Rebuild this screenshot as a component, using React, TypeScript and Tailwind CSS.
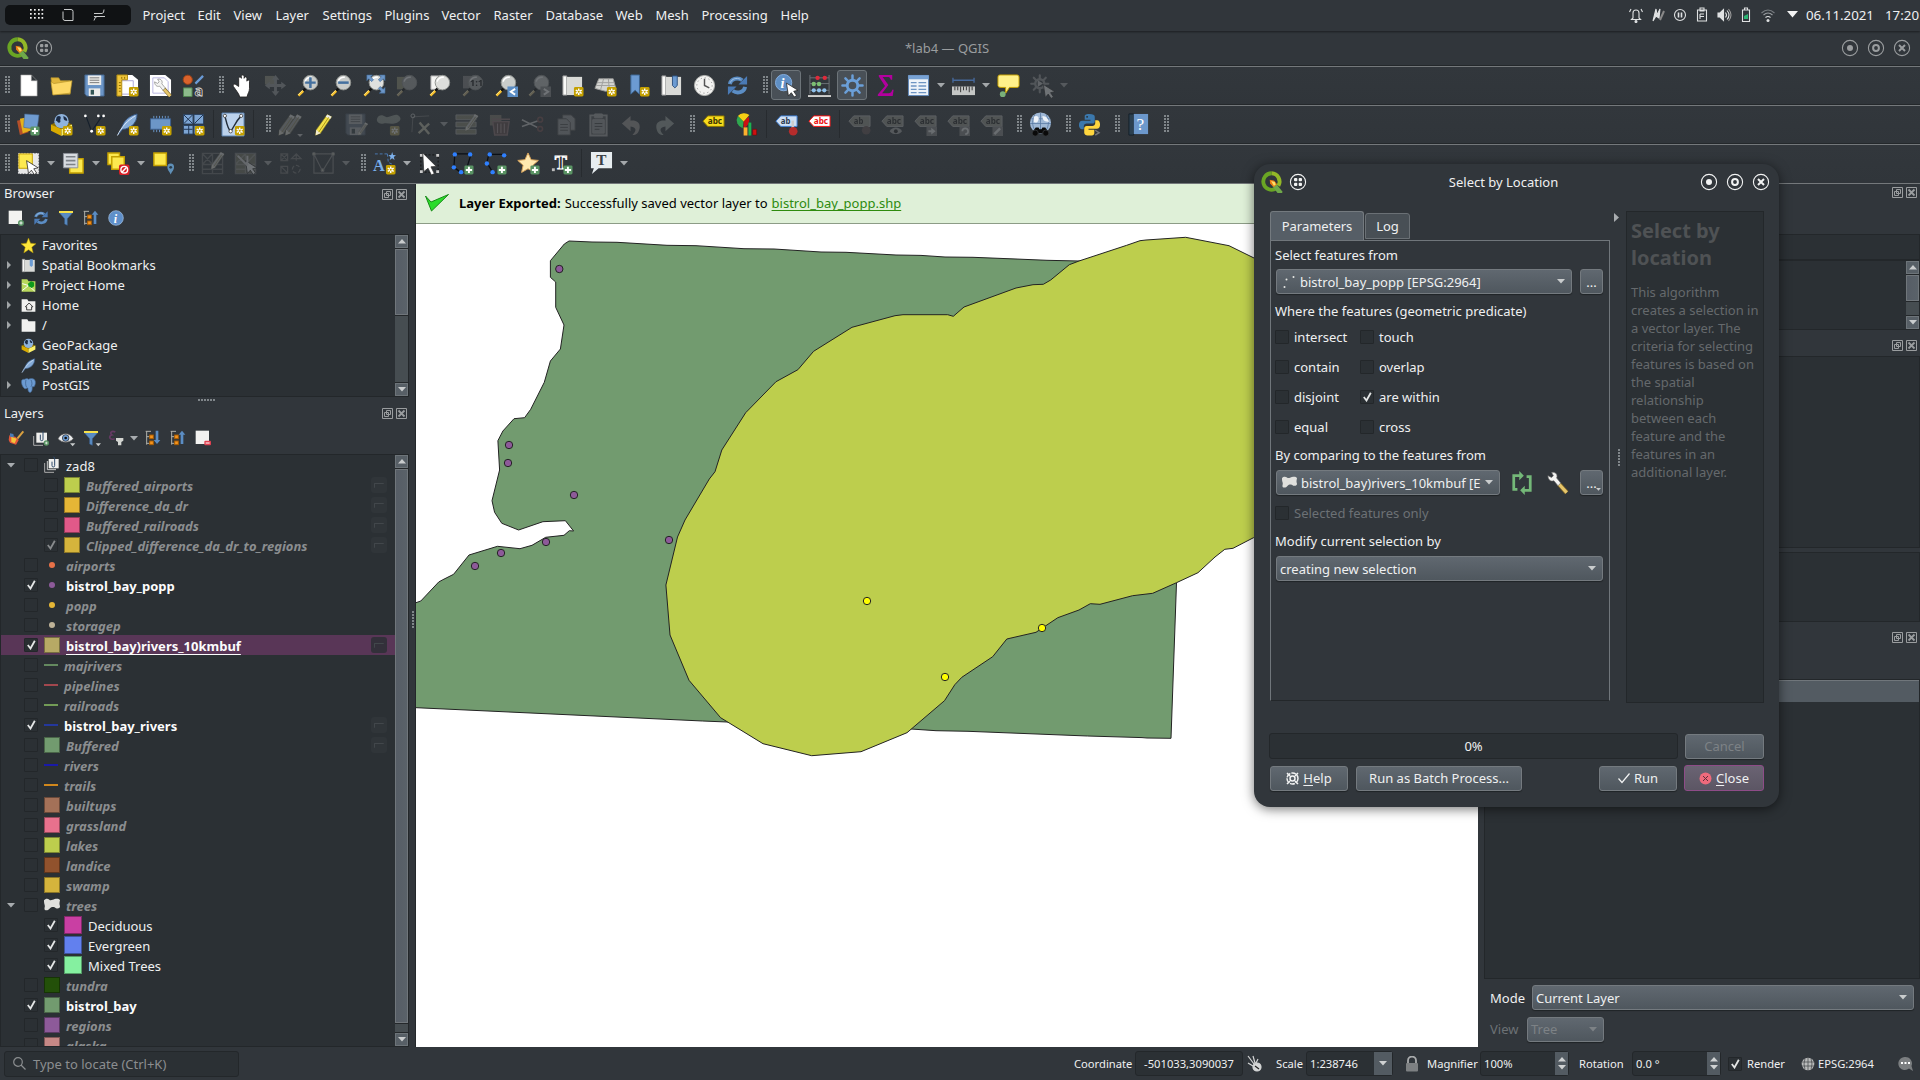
import React from "react";
import type { ReactNode } from "react";

/* ---------- icon primitives (24 x 24 canvas) ---------- */

const StarBadge = () => (
  <g>
    <rect x="13.5" y="13.5" width="10" height="10" rx="1.5" fill="#c4a000" />
    <path d="M18.5 15v7M15.4 16.8l6.2 3.5M15.4 20.3l6.2-3.5" stroke="#fff" strokeWidth="1.5" />
    <circle cx="18.5" cy="18.5" r="1.1" fill="#c4a000" />
  </g>
);
const PlusBadge = () => (
  <g>
    <rect x="14" y="14" width="9.5" height="9.5" rx="1.5" fill="#5a9464" />
    <path d="M18.7 15.5v6.5M15.5 18.7h6.5" stroke="#fff" strokeWidth="2" />
  </g>
);
const Lens = ({ fill = "#c9ccca" }: { fill?: string }) => (
  <g>
    <path d="M9 15 6 18" stroke="#111" strokeWidth="2.4" />
    <path d="M6.5 17.5 1.5 22.5" stroke="#f9c22e" strokeWidth="2.6" />
    <path d="M6 17 1.2 21.8" stroke="#fff0a0" strokeWidth=".7" />
    <circle cx="14" cy="9" r="7.6" fill={fill} stroke="#8e918e" strokeWidth="1" />
    <path d="M8.5 8a6 6 0 0 1 7-4.6" stroke="#fff" strokeWidth="1.6" fill="none" />
  </g>
);
const Cursor = ({ x = 0, y = 0 }: { x?: number; y?: number }) => (
  <path
    transform={`translate(${x} ${y})`}
    d="M0 0 12 7.5 7.5 8.5 10.5 13 8 14.5 5 10 2 13.5Z"
    fill="#fff"
    stroke="#222"
    strokeWidth=".8"
  />
);
const Tag = ({ fill, stroke, text, label = "abc" }: { fill: string; stroke: string; text: string; label?: string }) => (
  <g>
    <path d="M1 8.500 6 3h17v11H6Z" fill={fill} stroke={stroke} />
    <text
      x="6"
      y="11.800"
      fontSize="9"
      fontWeight="700"
      fill={text}
      fontFamily="Noto Sans"
      textLength={label === "ab" ? 10 : 15}
      lengthAdjust="spacingAndGlyphs"
    >
      {label}
    </text>
  </g>
);
const Refresh = () => (
  <g fill="none" stroke="#5b8dc4" strokeWidth="4">
    <path d="M4 10.5C5 5 12 3 17 6.5" />
    <path d="M20 13.5C19 19 12 21 7 17.5" />
    <path d="M22 2v9h-9ZM2 22v-9h9Z" fill="#4a7ab5" stroke="none" />
    <path d="M4.5 9C6 5 11 3.5 15 5.5" stroke="#a5c4e6" strokeWidth="1" />
  </g>
);
const Tree = () => (
  <g fill="none" stroke="#b9b9b3" strokeWidth="1.4">
    <path d="M1 2h8M2.5 2v20M2.5 10h5M2.5 20h5" />
    <rect x="7" y="7.500" width="5.500" height="5.500" fill="#f5931d" stroke="#a85c00" />
    <rect x="7" y="16.500" width="5.500" height="5.500" fill="#f5931d" stroke="#a85c00" />
  </g>
);
const Gear = ({ c = "#6b9fd8" }: { c?: string }) => (
  <g fill="none" stroke={c}>
    <circle cx="12" cy="12" r="5.500" strokeWidth="3" />
    <path
      strokeWidth="2.600"
      strokeLinecap="round"
      d="M12 1.500V6M12 18v4.500M1.500 12H6M18 12h4.500M4.600 4.600l3 3M16.400 16.400l3 3M4.600 19.400l3-3M16.400 7.600l3-3"
    />
  </g>
);
const Pencil = ({ c = "#f2e04a" }: { c?: string }) => (
  <g>
    <path d="M17 1.5 21.500 4 10 21 4.800 23.300 5.500 17.500Z" fill={c} stroke="#7a6f1a" strokeWidth=".6" />
    <path d="M17 1.500 21.500 4 20 6.300 15.400 3.800Z" fill="#e9e9e5" />
    <path d="M5.500 17.500 10 21 4.800 23.300Z" fill="#f1ead0" />
    <path d="M18.500 4.500 8 20" stroke="#a99416" strokeWidth="1" />
  </g>
);
const Floppy = () => (
  <g>
    <path d="M2 1h20v22H4l-2-2Z" fill="#6a94c6" stroke="#44658d" />
    <rect x="5" y="1.500" width="14" height="10" fill="#ececea" />
    <path d="M7 4h10M7 6.500h10M7 9h10" stroke="#777" />
    <rect x="6" y="15" width="12" height="8" fill="#ececea" />
    <rect x="8" y="16.500" width="3.500" height="5" fill="#355" />
  </g>
);
const Grid = ({ c = "#5b86bb" }: { c?: string }) => (
  <g fill="none" stroke={c} strokeWidth="1.4">
    <path d="M1.500 1.500h21v21h-21zM1.500 13h21M12 1.500v21M1.500 1.500l10 11M12 1.500l-10 11M22.500 1.500l-10 11M1.500 18h21" />
  </g>
);
const Nodes = () => (
  <g>
    <path d="M3 3 9 19 20 3" fill="none" stroke="#16202c" strokeWidth="1.2" />
    <circle cx="2.500" cy="3" r="1.400" fill="#fff" />
    <circle cx="9" cy="19" r="1.500" fill="#fff" />
    <circle cx="16" cy="3" r="1.400" fill="#fff" />
    <circle cx="21.500" cy="3" r="1.400" fill="#fff" />
  </g>
);
const Feather = () => (
  <g>
    <path d="M2 23 6 15C9 7 14 3 22 1c0 6-2 9-5 12-3 2-6 4-10 4Z" fill="#86acd8" stroke="#35557f" />
    <path d="M1.500 23.500C6 14 12 8 20 3" fill="none" stroke="#e8f1fb" strokeWidth=".9" />
  </g>
);
const BoxGlobe = () => (
  <g>
    <path d="M1 12 12 7l11 5-11 6Z" fill="#8c6f00" />
    <circle cx="12" cy="8.500" r="7.500" fill="#8fb3dc" />
    <path d="M7 4c3-2 5 0 4 2s1 3-1 4-2-2-4-2M14 3c3 1 4 3 4 5-3 0-4-1-4-5" fill="#1d2c44" />
    <path d="M1 12 12 17v7L1 18.500Z" fill="#d9ab00" />
    <path d="M23 12 12 17v7l11-5.500Z" fill="#fbf06a" />
  </g>
);
const Funnel = () => (
  <g>
    <path d="M2 4h20l-8 9v10l-4-2v-8Z" fill="#5b8dc4" stroke="#3b6090" strokeWidth=".8" />
    <path d="M1.500 1.500h21v3h-21z" fill="#f6e04a" />
  </g>
);
const Book = () => (
  <g>
    <path d="M2 2h4v20H2z" fill="#fafaf8" stroke="#999" />
    <path d="M6 3h16v19H6z" fill="#d9dad7" />
  </g>
);
const Wrench = () => (
  <g>
    <path d="M13 13 21.500 22.500" stroke="#7c6427" strokeWidth="5" />
    <path d="M13 13 21.500 22.500" stroke="#e6c66b" strokeWidth="3.400" />
    <path d="M1 4 5 6 7 4 5 .5c3-.8 6 1 6 4l-.5 2L15 12l-3 3-4.500-5.500C4 11 1 8 1 4Z" fill="#f4f4f2" stroke="#666" strokeWidth=".7" />
  </g>
);

const icons: Record<string, ReactNode> = {
  newfile: <path d="M4 1h11l6 6v16H4ZM15 1v6h6" fill="#fff" stroke="#999" strokeWidth=".6" />,
  open: (
    <g stroke="#b5932a" strokeWidth=".7">
      <path d="M1 4h8l2 3h10v14H3Z" fill="#e0b53c" />
      <path d="M4 10 23 7 21 20 3 22 1 8Z" fill="#fdd866" />
    </g>
  ),
  save: <Floppy />,
  layout: (
    <g>
      <path d="M1 1h16l6 5v17H1Z" fill="#fff" />
      <path d="M4 7h14v14H4z" fill="none" stroke="#aaa6d8" />
      <path d="M1 1h11v5H6v17H1Z" fill="#f0c53a" stroke="#b08b10" />
      <path d="M3 9h2M3 12h2M3 15h2M3 18h2M6 3v2M9 3v2" stroke="#8a6b00" />
      <StarBadge />
    </g>
  ),
  layoutmgr: (
    <g>
      <path d="M1 1h16l6 5v17H1Z" fill="#fff" />
      <path d="M4 4h12l4 4v12H4z" fill="none" stroke="#b9b6e2" />
      <g transform="translate(5 5) scale(.8)">
        <Wrench />
      </g>
    </g>
  ),
  style: (
    <g>
      <circle cx="6" cy="6" r="4.800" fill="#d9632c" stroke="#9c4216" />
      <path d="M14 10 22 2" stroke="#6a9bd6" strokeWidth="2.400" />
      <path d="M1.500 14.500h9v9h-9z" fill="#8dbb8c" stroke="#4f8550" />
      <text x="13" y="23" fontSize="15" fontWeight="700" fill="#333" stroke="#ddd" strokeWidth=".8" fontFamily="Noto Sans">
        a
      </text>
    </g>
  ),
  hand: (
    <path
      d="M8 13V4.500c0-2 2.600-2 2.800 0V2.500c0-2 2.700-2 2.900 0v2c.2-2 2.800-2 2.900 0v3c.3-1.800 2.700-1.600 2.700.3V15c0 4-2 5-2.500 9H9c-.5-3-2-4.500-4-7.500L2.500 13c-1-2 1.200-3.200 2.500-2Z"
      fill="#fff"
      stroke="#222"
      strokeWidth=".9"
    />
  ),
  pan: (
    <g fill="#9aa3a8">
      <path d="M1 2h10v9H1z" fill="#9a9a68" />
      <path d="M12 1l4 5h-2.500v4.500H18V8l5 4-5 4v-2.500h-4.500V18H16l-4 5-4-5h2.500v-4.500H6V16l-5-4 5-4v2.500h4.500V6H8Z" />
    </g>
  ),
  zoomin: (
    <g>
      <Lens />
      <path d="M14 3.500v11M8.500 9h11" stroke="#44709f" strokeWidth="2.600" />
    </g>
  ),
  zoomout: (
    <g>
      <Lens />
      <path d="M8.500 9h11" stroke="#44709f" strokeWidth="2.600" />
    </g>
  ),
  zoomfull: (
    <g>
      <Lens fill="#dfe0de" />
      <path
        d="M4 1h6L8 3l3 3-2 2-3-3-2 2ZM23 1h-6l2 2-3 3 2 2 3-3 2 2ZM23 20h-6l2-2-3-3 2-2 3 3 2-2Z"
        fill="#6c96c8"
        stroke="#3d6591"
        strokeWidth=".6"
      />
    </g>
  ),
  zoomsel: (
    <g>
      <path d="M1 3h12v13H1z" fill="#9a9a4a" />
      <Lens fill="#aaa" />
    </g>
  ),
  zoomlayer: (
    <g>
      <path d="M2 2h12v14H2z" fill="#f4f4f2" stroke="#aaa" />
      <Lens fill="#dddedb" />
    </g>
  ),
  zoomnative: (
    <g>
      <path d="M1 2h12v13H1z" fill="#888" />
      <Lens fill="#aaa" />
      <text x="8" y="13" fontSize="10" fontWeight="700" fontFamily="Noto Sans" fill="#111">
        1:1
      </text>
    </g>
  ),
  zoomlast: (
    <g>
      <Lens />
      <path d="M13 13h11v11H13z" fill="#5b8dc4" />
      <path d="M21 15.500 16.500 18.500 21 21.500" stroke="#fff" strokeWidth="2" fill="none" />
    </g>
  ),
  zoomnext: (
    <g>
      <Lens />
      <path d="M13 13h11v11H13z" fill="#8a8d90" />
      <path d="M16.500 15.500 21 18.500 16.500 21.500" stroke="#fff" strokeWidth="2" fill="none" />
    </g>
  ),
  newmap: (
    <g>
      <Book />
      <StarBadge />
    </g>
  ),
  new3d: (
    <g>
      <path d="M5 5h15l3 11-11 2L1 15Z" fill="#d4d5d2" stroke="#9a9a98" />
      <path d="M4 9h17M3 12h19M10 5 7 16M15 5l1 12" stroke="#a0a09e" />
      <StarBadge />
    </g>
  ),
  newbook: (
    <g>
      <path d="M4 1h9v20l-4.500-4L4 21Z" fill="#6c9bd2" stroke="#3d6591" />
      <StarBadge />
    </g>
  ),
  showbook: (
    <g>
      <Book />
      <path d="M13 2h5v10l-2.500 2.500L13 12Z" fill="#6c9bd2" stroke="#2f5380" />
    </g>
  ),
  clock: (
    <g>
      <circle cx="12" cy="12" r="10.500" fill="#f3f3f1" stroke="#b4b5b2" />
      <circle cx="12" cy="12" r="8" fill="none" stroke="#777" strokeDasharray="1 3.190" />
      <path d="M12 5v7l5 2.500" stroke="#555" strokeWidth="1.500" fill="none" />
    </g>
  ),
  refresh: <Refresh />,
  identify: (
    <g>
      <circle cx="9" cy="9" r="8.500" fill="#5f8fc4" stroke="#86aede" />
      <text x="5.800" y="14.500" fontSize="15" fontWeight="700" fontStyle="italic" fontFamily="Liberation Serif" fill="#fff">
        i
      </text>
      <Cursor x={12} y={9.500} />
    </g>
  ),
  abacus: (
    <g>
      <path d="M2 1v20M22 1v20M2 4h20M2 10h20M2 17h20" stroke="#6e7478" />
      <path d="M0 23h24" stroke="#d0d0ce" strokeWidth="2" />
      <g fill="#e02a3a">
        <circle cx="10" cy="4" r="2.300" />
        <circle cx="17.500" cy="4" r="2.300" />
      </g>
      <g fill="#7bbf72">
        <circle cx="6" cy="10.500" r="2.300" />
        <circle cx="11.500" cy="10.500" r="2.300" />
      </g>
      <g fill="#8ec0ea">
        <circle cx="6" cy="17" r="2.200" />
        <circle cx="11.500" cy="17" r="2.200" />
        <circle cx="17" cy="17" r="2.200" />
      </g>
    </g>
  ),
  gear: <Gear />,
  sigma: <path d="M5 1h14v5h-1.500C17 3.500 16 3 14 3H9l6 8.500L8.500 20H15c2.500 0 3.500-1 4-3.500h1.500L19.500 23H4v-1.500l7.500-9L5 2.500Z" fill="#b3009e" />,
  table: (
    <g>
      <path d="M1.500 1.500h21v21h-21z" fill="#eef3f9" stroke="#5f88ba" />
      <path d="M1.500 1.500h21v4h-21z" fill="#78a2d4" />
      <path d="M4 9h6M4 12.500h6M4 16h6M4 19.500h6M12 9h8M12 12.500h8M12 16h8M12 19.500h8" stroke="#6d94c2" strokeWidth="1.400" />
    </g>
  ),
  ruler: (
    <g>
      <path d="M1 4v5M23 4v5M1 6.500h22" stroke="#46699c" strokeWidth="1.400" />
      <path d="M0 13h24v9H0z" fill="#c4c6c5" />
      <path d="M3 13v4M6 13v4M9 13v6M12 13v4M15 13v4M18 13v6M21 13v4" stroke="#333" />
    </g>
  ),
  tip: (
    <g>
      <path d="M3 1h18q2 0 2 2v9q0 2-2 2h-8l-4 6v-6H4q-3 0-3-2V3q0-2 2-2Z" fill="#fff08a" stroke="#c4a000" />
      <circle cx="6" cy="21" r="3" fill="#79b07a" />
    </g>
  ),
  gearrun: (
    <g>
      <g transform="scale(.85)">
        <Gear c="#9a9ea1" />
      </g>
      <path d="M8 6.500v7l5.500-3.500Z" fill="#ccc" />
      <Cursor x={14} y={11} />
    </g>
  ),
  datasource: (
    <g>
      <path d="M0 8l9-2 3 14-9 3Z" fill="#b5502a" />
      <path d="M3 6l10-2 2 14-9 3Z" fill="#e5b21c" />
      <path d="M8 1l15 1-2 15-14-2Z" fill="#6f9bd0" stroke="#44658d" strokeWidth=".6" />
      <PlusBadge />
    </g>
  ),
  geopackage: (
    <g>
      <BoxGlobe />
      <StarBadge />
    </g>
  ),
  shape: (
    <g>
      <Nodes />
      <StarBadge />
    </g>
  ),
  spatialite: (
    <g>
      <Feather />
      <StarBadge />
    </g>
  ),
  memory: (
    <g>
      <path d="M5 3v3M8 3v3M11 3v3M14 3v3M17 3v3M20 3v3M5 17v3M8 17v3M11 17v3" stroke="#6a94c6" />
      <path d="M1.500 6h21v11h-21z" fill="#6c96c8" stroke="#3d5f8c" />
      <StarBadge />
    </g>
  ),
  mesh: (
    <g>
      <path d="M1.500 1.500h10v10h-10zM12.500 1.500h10v10h-10zM1.500 13h10v9h-10zM12.500 13h10v9h-10z" fill="#7da5d4" stroke="#2a415e" />
      <path d="M2 2l9 9M11 2l-9 9M22 2l-9 9M2 17h9M7 13v9" stroke="#1f3350" />
      <StarBadge />
    </g>
  ),
  virtual: (
    <g>
      <path d="M0 0h23v24H0z" fill="#bcd2ec" stroke="#5b82b0" />
      <path d="M3 3c2 8 3 14 6 16 3-3 5-10 11-16" fill="none" stroke="#222d3a" strokeWidth="1.500" />
      <g fill="#fff" stroke="#333" strokeWidth=".8">
        <circle cx="3" cy="3" r="1.700" />
        <circle cx="9" cy="19" r="1.800" />
        <circle cx="20" cy="3" r="1.700" />
      </g>
      <StarBadge />
    </g>
  ),
  pencils: (
    <g>
      <g transform="translate(-4 0)">
        <Pencil c="#aaa" />
      </g>
      <g transform="translate(3 0)">
        <Pencil c="#aaa" />
      </g>
      <path d="M20 22h6l-3 3Z" fill="#ccc" />
    </g>
  ),
  pencil: <Pencil />,
  saveedit: (
    <g>
      <g opacity=".7">
        <Floppy />
      </g>
      <g transform="translate(12 9) scale(.6)">
        <Pencil c="#bbb" />
      </g>
    </g>
  ),
  addpoly: (
    <g>
      <path d="M0 6c2-5 6-4 9-2s10-5 14-1-1 7-5 8-8-1-11 0-8-1-7-5Z" fill="#8ca08c" />
      <StarBadge />
    </g>
  ),
  vertex: (
    <g>
      <path d="M3 4 2 20M3 4 20 3" stroke="#888" strokeWidth=".8" fill="none" />
      <circle cx="3" cy="3" r="2" fill="none" stroke="#ccc" />
      <path d="M10 10l10 12M20 11 9 21" stroke="#c9c48a" strokeWidth="2.500" />
    </g>
  ),
  attrs: (
    <g>
      <path d="M1 2h21v5H1zM1 9.500h21v5H1zM1 17h21v5H1z" fill="#8a8a52" stroke="#aaa" />
      <g transform="translate(7 0) scale(.8)">
        <Pencil c="#ccc" />
      </g>
    </g>
  ),
  trash: (
    <g>
      <path d="M2 2h12v11H2z" fill="#8a7a5a" />
      <path d="M5 9h17l-2 14H7ZM4 6.500h19" fill="#7c4444" stroke="#b06a6a" strokeWidth="1.500" />
      <path d="M10 11v10M13.500 11v10M17 11v10" stroke="#c99" />
    </g>
  ),
  cut: (
    <g fill="none" strokeWidth="1.600">
      <path d="M1 7l16 8M1 14l17-6" stroke="#ccc" />
      <circle cx="20" cy="7" r="2.500" stroke="#a44" />
      <circle cx="20" cy="16.500" r="2.500" stroke="#a44" />
    </g>
  ),
  copy: (
    <g fill="#9a9ea1" stroke="#555">
      <path d="M9 2h9l4 4v12H9z" />
      <path d="M4 6h9l4 4v13H4z" />
      <path d="M6.500 12h8M6.500 15h8M6.500 18h8" />
    </g>
  ),
  paste: (
    <g stroke="#aaa">
      <path d="M3.500 2.500h17v21h-17z" fill="#555a5e" strokeWidth="2" />
      <path d="M6 7h12v14H6z" fill="#9a9ea1" />
      <path d="M8 1h8v4H8z" fill="#aaa" />
      <path d="M8 11h8M8 14h8M8 17h5" stroke="#444" />
    </g>
  ),
  undo: <path d="M11 3v5c8-1 12 4 8 12-1 2-4 3-6 3 4-4 5-8-2-9v5L2 11Z" fill="#a89a94" />,
  redo: <path d="M13 3v5C5 7 1 12 5 20c1 2 4 3 6 3-4-4-5-8 2-9v5l9-8Z" fill="#98a8a0" />,
  label: <Tag fill="#f7dc1c" stroke="#8a7400" text="#3b3300" />,
  diagram: (
    <g>
      <path d="M9 9 3 3a9 9 0 0 1 12-1Z" fill="#f6cf14" />
      <path d="M9 9 3 3a9 9 0 0 0 5 13Z" fill="#2fa84f" />
      <path d="M9 9v7c5-2 7-8 5-12Z" fill="#cc1111" />
      <path d="M9 15h4v8.500H9z" fill="#fbb02d" />
      <path d="M14 10h3v13.500h-3z" fill="#1bb34f" />
      <path d="M18.500 17h4v6h-4z" fill="#cc1111" stroke="#700" strokeWidth=".5" />
    </g>
  ),
  labelpin: (
    <g>
      <Tag fill="#cfe0f5" stroke="#3f7fd6" text="#2c3b50" label="ab" />
      <path d="M18.500 8v10" stroke="#ccc" strokeWidth="2.500" />
      <circle cx="19" cy="19" r="4.500" fill="#b52c2c" />
    </g>
  ),
  labelred: <Tag fill="#fff" stroke="#ff1010" text="#ee1010" />,
  dlabelpin: (
    <g>
      <Tag fill="#9a9a80" stroke="#bbb" text="#222" label="ab" />
      <circle cx="19" cy="18" r="4.500" fill="#7a5050" />
    </g>
  ),
  dlabeleye: (
    <g>
      <Tag fill="#9a9a80" stroke="#bbb" text="#222" />
      <path d="M9 19c3-5 10-5 13 0-3 4-10 4-13 0Z" fill="#aaa" />
      <circle cx="15.500" cy="19" r="2" fill="#222" />
    </g>
  ),
  dlabelmove: (
    <g>
      <Tag fill="#9a9a80" stroke="#bbb" text="#222" />
      <path d="M13 14h11v10H13z" fill="#888" />
      <path d="M15 18h3v-2.500l4.500 3.500-4.500 3.500V20h-3z" fill="#eee" />
    </g>
  ),
  dlabelrot: (
    <g>
      <Tag fill="#9a9a80" stroke="#bbb" text="#222" />
      <path d="M13 14h11v10H13z" fill="#888" />
      <path d="M16 19a3 3 0 1 1 3 3" stroke="#eee" strokeWidth="1.800" fill="none" />
    </g>
  ),
  dlabeledit: (
    <g>
      <Tag fill="#9a9a80" stroke="#bbb" text="#222" />
      <path d="M13 14h11v10H13z" fill="#888" />
      <path d="M15 22l6-6" stroke="#eee" strokeWidth="2.500" />
    </g>
  ),
  csw: (
    <g>
      <circle cx="12" cy="10.500" r="11" fill="#9fb8d6" />
      <path d="M2 6h20M1 11h22M12 0v20M6 2c-3 6-3 10 0 16M18 2c3 6 3 10 0 16" stroke="#5878a2" fill="none" strokeWidth=".8" />
      <path d="M5 4c3-2 6 0 5 3s-3 4-5 2M14 3c4 0 6 3 7 6-4 0-7-1-7-6" fill="#eef3f9" />
      <path d="M7 15h3l1 2h2l1-2h3l4 6H3Z" fill="#0a0a0a" />
      <circle cx="6.500" cy="21" r="3.200" fill="#0a0a0a" stroke="#3a3d40" strokeWidth=".8" />
      <circle cx="17.500" cy="21" r="3.200" fill="#0a0a0a" stroke="#3a3d40" strokeWidth=".8" />
    </g>
  ),
  python: (
    <g>
      <path d="M12 1c-5 0-5 1.500-5 3v3h6v1H4.500C2 8 1 10 1 12.500S2.500 17 4 17h2v-3c0-2 1.500-3 3-3h6c1.500 0 2.500-1 2.500-2.500V4c0-2-2-3-5.500-3Z" fill="#3b78ad" />
      <path d="M12 23.500c5 0 5-1.500 5-3v-3h-6v-1h8.500c2.500 0 3.500-2 3.500-4.500s-1-4.500-3-4.500h-2v3c0 2-1.500 3-3 3H9c-1.500 0-2.500 1-2.500 2.500v4.500c0 2 2 3 5.500 3Z" fill="#ffd63e" />
      <circle cx="9.500" cy="4" r="1" fill="#2a2e32" />
      <path d="M18 18l4 2.500-4 2.500" stroke="#777" strokeWidth="1.500" fill="none" />
    </g>
  ),
  help: (
    <g>
      <path d="M2 1h5v22H2z" fill="#2c4050" stroke="#15202a" />
      <path d="M7 1h15v21H7z" fill="#6c98cc" />
      <text x="10" y="18" fontSize="18" fontFamily="Liberation Serif" fill="#fff">
        ?
      </text>
    </g>
  ),
  select: (
    <g>
      <path d="M1.500 1.500h21v21h-21z" fill="#e8e8e8" stroke="#e8e8e8" strokeDasharray="1.500 1.500" />
      <path d="M2 2h14v15H2z" fill="#fde94f" stroke="#c4a000" />
      <Cursor x={10} y={9} />
    </g>
  ),
  selform: (
    <g>
      <path d="M8 7h14v15H8z" fill="#fde94f" stroke="#c4a000" strokeWidth="1.500" />
      <path d="M1.500 1.500h15v15h-15z" fill="#d7dbe0" stroke="#8c9198" />
      <path d="M4 5h10M4 9h10M4 13h10" stroke="#7c8187" strokeWidth="1.600" />
    </g>
  ),
  deselect: (
    <g>
      <path d="M1 1h12v12H1z" fill="#fde94f" stroke="#c4a000" strokeWidth="1.500" />
      <path d="M5 5h13v13H5z" fill="#fde94f" stroke="#c4a000" strokeWidth="1.500" />
      <rect x="12.500" y="13" width="11" height="11" rx="2" fill="#d81f26" />
      <circle cx="18" cy="18.500" r="3.500" fill="none" stroke="#fff" strokeWidth="1.500" />
      <path d="M15.800 20.800 20.300 16.200" stroke="#fff" strokeWidth="1.500" />
    </g>
  ),
  selloc: (
    <g>
      <path d="M2 1h13v13H2z" fill="#fde94f" stroke="#c4a000" strokeWidth="1.500" />
      <path d="M19.500 12a3.800 3.800 0 0 1 3.500 4c0 3-2 4-3.500 7.500-1.500-3.500-3.500-4.500-3.500-7.500a3.800 3.800 0 0 1 3.500-4Z" fill="#5f90b8" />
      <circle cx="19.500" cy="16" r="1.500" fill="#2a3c4c" />
    </g>
  ),
  gridpen: (
    <g>
      <g opacity=".6">
        <Grid c="#999" />
      </g>
      <g transform="translate(7 -1) scale(.8)">
        <Pencil c="#ccc" />
      </g>
    </g>
  ),
  gridsel: (
    <g>
      <path d="M2 2h20v20H2z" fill="#77774a" />
      <g opacity=".6">
        <Grid c="#aaa" />
      </g>
      <Cursor x={12} y={9} />
      <path d="M4 4l10 10M14 4v10" stroke="#ddd" strokeWidth="2" />
    </g>
  ),
  gridtf: (
    <g fill="none" stroke="#777" strokeWidth="1.300">
      <path d="M2 2h7v7H2zM2 2l7 7M9 2 2 9M2 15h7v7H2zM2 15l7 7M13 7l5-5 5 5ZM18 2v7" />
      <circle cx="18" cy="18" r="4" strokeDasharray="4 2" />
    </g>
  ),
  gridtri: (
    <g stroke="#888" strokeWidth="1.200" fill="none">
      <path d="M2 2h20v20H2zM2 2l9 18L22 2" />
      <g fill="#cc9">
        <circle cx="2" cy="2" r="1.500" />
        <circle cx="11" cy="19" r="1.500" />
        <circle cx="22" cy="2" r="1.500" />
      </g>
    </g>
  ),
  annot: (
    <g>
      <path d="M2 2h13M15 2l1 9 5 2" stroke="#4a7ab5" strokeDasharray="3 2" fill="none" />
      <path d="M20 0l1 3 3 .300-2.300 2 .8 3L20 6.500l-2.500 1.800.8-3-2.300-2 3-.3Z" fill="#7db0ea" />
      <text x="0" y="20" fontSize="17" fontWeight="700" fontFamily="Liberation Serif" fill="#79aee8">
        A
      </text>
      <StarBadge />
    </g>
  ),
  pickarrow: (
    <g>
      <path d="M3 3h18v18H3z" fill="none" stroke="#111" strokeDasharray="2 2" />
      <path d="M2 2h3v3H2zM19 2h3v3h-3zM2 19h3v3H2zM19 19h3v3h-3z" fill="#ccc" />
      <path d="M5 1 19 15l-5.500.5 3.500 7-3 1.500-3.500-7L6 20.500Z" fill="#fff" stroke="#333" strokeWidth=".8" />
    </g>
  ),
  polyanno: (
    <g>
      <path d="M4 2h17l-4 13M4 2 3 16l7 5" fill="none" stroke="#0b0f14" strokeWidth="1.300" />
      <g fill="#2f80ff">
        <circle cx="4" cy="2.500" r="2.300" />
        <circle cx="20" cy="2.500" r="2.300" />
        <circle cx="3" cy="16" r="2.300" />
        <circle cx="10.500" cy="21" r="2.300" />
      </g>
      <PlusBadge />
    </g>
  ),
  lineanno: (
    <g>
      <path d="M21 2.500H5L3 11l6 10" fill="none" stroke="#0b0f14" strokeWidth="1.300" />
      <g fill="#2f80ff">
        <circle cx="6" cy="2.500" r="2.300" />
        <circle cx="21" cy="3.500" r="2.300" />
        <circle cx="3" cy="12" r="2.300" />
        <circle cx="9" cy="21" r="2.300" />
      </g>
      <PlusBadge />
    </g>
  ),
  staranno: (
    <g>
      <path d="M11.500 1l3.200 7 7.600.8-5.700 5 1.700 7.500-6.800-3.800-6.700 3.800 1.600-7.500-5.600-5 7.500-.8Z" fill="#ffe9b0" stroke="#d9a45a" />
      <PlusBadge />
    </g>
  ),
  textanno: (
    <g>
      <text x="5" y="18" fontSize="19" fontWeight="700" fontFamily="Liberation Serif" fill="#222" stroke="#fff" strokeWidth="1">
        T
      </text>
      <path d="M2 17h3v3H2z" fill="#bbb" />
      <PlusBadge />
    </g>
  ),
  textbox: (
    <g>
      <path d="M1 0h22v17H9l-7 6 2-6H1Z" fill="#e7edf0" />
      <text x="6.500" y="14" fontSize="16" fontFamily="Liberation Serif" fontWeight="700" fill="#3a4045">
        T
      </text>
    </g>
  ),
  favstar: (
    <path d="M12 0l3.300 8.300 8.700.7-6.700 5.600L19.500 24 12 18.700 4.500 24l2.200-9.400L0 9l8.700-.7Z" fill="#fde63a" stroke="#a88a00" strokeWidth=".8" />
  ),
  bookmark: (
    <g>
      <Book />
      <path d="M14 2h5v10l-2.500 2.500L14 12Z" fill="#6c9bd2" />
    </g>
  ),
  projhome: (
    <g>
      <path d="M1 2h9l2 3h11v17H1Z" fill="#b9d85c" />
      <path d="M2 9l10 3 10 9M12 12 2 20" stroke="#fff" strokeWidth="1.500" fill="none" />
      <path d="M11 9l5-4 5 2v6l-4 3-5-3Z" fill="#0f9a1b" />
    </g>
  ),
  homefolder: (
    <g>
      <path d="M1 2h9l2 3h11v17H1Z" fill="#f1f1ef" />
      <path d="M7 14l6-6 6 6h-2v5H9v-5Z" fill="none" stroke="#333" strokeWidth="1.500" />
    </g>
  ),
  folder: <path d="M1 2h9l2 3h11v17H1Z" fill="#f1f1ef" />,
  gpkg: <BoxGlobe />,
  feather: <Feather />,
  postgis: (
    <g>
      <path
        d="M6 2c3-2 5-1 6 0 3-2 8-1 10 1 2 3 1 8-1 11h-3c0 4 0 8-3 9-3 0-4-2-4-7-2 0-3 2-5 1C2 15 0 7 1 4c1-2 3-2 5-2Z"
        fill="#6c9bd2"
        stroke="#41658f"
      />
      <path d="M8 3c-1 4-1 8 1 12M16 3c2 4 2 8 0 11" fill="none" stroke="#33557f" />
    </g>
  ),
  newlayer: (
    <g>
      <path d="M1 1h20v20H1z" fill="#f2f2f0" />
      <circle cx="19.500" cy="19.500" r="4.500" fill="#5a9464" />
      <path d="M19.500 17v5M17 19.500h5" stroke="#fff" strokeWidth="1.300" />
    </g>
  ),
  funnel: <Funnel />,
  funneldown: (
    <g>
      <Funnel />
      <path d="M19 20h8l-4 4.500Z" fill="#c9cccd" />
    </g>
  ),
  collapse: (
    <g>
      <Tree />
      <path d="M18 1l5 6h-3v14h-4V7h-3Z" fill="#5b8dc4" />
    </g>
  ),
  expand: (
    <g>
      <Tree />
      <path d="M18 21l5-6h-3V1h-4v14h-3Z" fill="#5b8dc4" />
    </g>
  ),
  info: (
    <g>
      <circle cx="12" cy="12" r="11" fill="#5f8fc9" stroke="#a8c4e4" />
      <text x="8.500" y="19" fontSize="18" fontWeight="700" fontStyle="italic" fontFamily="Liberation Serif" fill="#fff">
        i
      </text>
    </g>
  ),
  brush: (
    <g>
      <path d="M23 2 14 13" stroke="#d9a040" strokeWidth="3" />
      <path d="M2 8l9 2 5 5-4 7-9-3-2-4Z" fill="#e4573a" />
      <path d="M5 10l8 3-3 7-5-2Z" fill="#f2c43a" />
      <path d="M3 5l5 1 1 5-6-1Z" fill="#4a7ab5" />
    </g>
  ),
  group: (
    <g fill="none">
      <path d="M1 9v14h14" stroke="#aaa" strokeWidth="1.500" />
      <path d="M5 6v13h13" stroke="#ccc" strokeWidth="1.500" />
      <path d="M7 3h15v14H7z" fill="#efefed" />
      <path d="M12 7v6q0 2 2 2t2-2V2q0-2-2-2" stroke="#2f4a6b" strokeWidth="1.500" />
    </g>
  ),
  groupadd: (
    <g fill="none">
      <path d="M1 9v14h14" stroke="#aaa" strokeWidth="1.500" />
      <path d="M5 4h16v15H5z" fill="#efefed" />
      <path d="M11 7v7q0 2 2 2t2-2V2" stroke="#2f4a6b" strokeWidth="1.500" />
      <circle cx="20" cy="19.500" r="4" fill="#5a9464" />
      <path d="M20 17.500v4M18 19.500h4" stroke="#fff" />
    </g>
  ),
  eye: (
    <g>
      <path d="M0 13C5 3 18 3 23 13 17 20 6 20 0 13Z" fill="#e8eaec" stroke="#555" />
      <circle cx="11.500" cy="12" r="5" fill="#6c9bd2" stroke="#222" />
      <circle cx="11.500" cy="12" r="2" fill="#111" />
      <path d="M18 20h8l-4 4.500Z" fill="#c9cccd" />
    </g>
  ),
  epsilon: (
    <g>
      <path d="M11 3C5 0 2 5 6 7.500 0 9 2 16 10 13" fill="none" stroke="#643a63" strokeWidth="2.500" />
      <path d="M12 12h11v4l-3 2v5h-5v-5l-3-2Z" fill="#d4d6d2" />
    </g>
  ),
  remove: (
    <g>
      <path d="M1 1h20v20H1z" fill="#f2f2f0" />
      <rect x="14" y="16" width="10" height="7" rx="1.500" fill="#e04050" />
      <path d="M16 19.500h6" stroke="#fff" strokeWidth="1.500" />
    </g>
  ),
  poly: <path d="M0 5c2-3 6-3 8-1s5 0 8-1c4-1 8 0 8 2-1 4-1 6 0 9 0 3-3 4-6 3-3-3-7-2-9 0-2 3-6 4-8 2-1-3 1-4 0-7s-1-5-1-7Z" fill="#e0e0dd" />,
  wrench: <Wrench />,
  iterate: (
    <g fill="none" stroke="#74b878" strokeWidth="3">
      <path d="M10 4H3v15h4M14 20h7V5h-4" />
      <path d="M9 -1v10L14 4ZM15 15v10L10 20Z" fill="#74b878" stroke="none" />
    </g>
  ),
  qgis: (
    <g>
      <path d="M11.500 2.500a9 9 0 1 0 5 16.500" fill="none" stroke="#6aa524" strokeWidth="4.200" />
      <path d="M11.500 2.500a9 9 0 0 1 7.500 13.500" fill="none" stroke="#93b827" strokeWidth="4.200" />
      <path d="M10 10l4 .5 9.500 12-.5 1.500h-5L10.500 14Z" fill="#6fa84a" />
      <path d="M9.500 9.500l5 1 3 4-3.500 3-4-3.500Z" fill="#ee7913" />
      <path d="M11 11l4 1 1 3-2 1Z" fill="#fbe36a" />
    </g>
  ),
};

const Icon = ({ n, s = "size-6", off = false }: { n: string; s?: string; off?: boolean }) => (
  <svg viewBox="0 0 24 24" className={`${s} shrink-0 overflow-visible ${off ? "opacity-30 grayscale-[60%]" : ""}`}>
    {icons[n]}
  </svg>
);

/* ---------- toolbar pieces ---------- */

const Dots = () => (
  <svg width="5" height="18" className="shrink-0" shapeRendering="crispEdges" fill="#80868a">
    {[0, 3, 6, 9, 12, 15].map((y) => (
      <g key={y}>
        <rect x="0" y={y} width="2" height="2" />
        <rect x="3" y={y} width="2" height="2" />
      </g>
    ))}
  </svg>
);
const Handle = () => (
  <div className="flex w-4 shrink-0 justify-end pr-[2px]">
    <Dots />
  </div>
);
const Down = ({ c = "#a8acaf" }: { c?: string }) => (
  <svg width="8" height="5" viewBox="0 0 8 5" className="shrink-0">
    <path d="M0 0h8L4 4.500Z" fill={c} />
  </svg>
);
const Up = ({ c = "#a8acaf" }: { c?: string }) => (
  <svg width="8" height="5" viewBox="0 0 8 5" className="shrink-0">
    <path d="M0 4.500h8L4 0Z" fill={c} />
  </svg>
);

/* "|" handle, "." separator, "v" arrow, "-v" dim arrow, "-x" disabled icon, "*x" pressed button */
const Toolbar = ({ items }: { items: string }) => (
  <div className="flex h-[39px] items-center border-t border-[#74787b] bg-linear-to-b from-[#32373c] to-[#30353a] pb-[2px] shadow-[0_-1px_0_#24282b]">
    <div className="flex w-[11.5px] shrink-0 justify-end pr-[2px]">
      <Dots />
    </div>
    {items.split(" ").map((it, i) => {
      if (it === "|") return <Handle key={i} />;
      if (it === ".")
        return (
          <div key={i} className="flex w-[7px] shrink-0 justify-center">
            <div className="h-7 w-px bg-[#272b2f]" />
          </div>
        );
      if (it === "v" || it === "-v")
        return (
          <div key={i} className="flex w-3 shrink-0 justify-center">
            <Down c={it === "v" ? "#a4a8ab" : "#55595d"} />
          </div>
        );
      const pressed = it[0] === "*";
      const off = it[0] === "-";
      return (
        <div key={i} className="flex w-[33px] shrink-0 justify-center">
          <div
            className={
              pressed
                ? "flex size-[30px] items-center justify-center rounded-[3px] border border-[#6d7479] bg-[#495057]"
                : "flex size-[30px] items-center justify-center"
            }
          >
            <Icon n={pressed || off ? it.slice(1) : it} s="size-[23px]" off={off} />
          </div>
        </div>
      );
    })}
  </div>
);

const menu: [string, string][] = [
  ["Project", "w-[55px]"],
  ["Edit", "w-[36px]"],
  ["View", "w-[42px]"],
  ["Layer", "w-[47px]"],
  ["Settings", "w-[62px]"],
  ["Plugins", "w-[57px]"],
  ["Vector", "w-[52px]"],
  ["Raster", "w-[52px]"],
  ["Database", "w-[70px]"],
  ["Web", "w-[40px]"],
  ["Mesh", "w-[46px]"],
  ["Processing", "w-[79px]"],
  ["Help", "w-[40px]"],
];

const Circle = ({ kind, c }: { kind: string; c: string }) => (
  <svg width="18" height="18" viewBox="0 0 18 18" fill="none" stroke={c} className="shrink-0">
    <circle cx="9" cy="9" r="7.600" strokeWidth="1.100" />
    {kind === "dot" && <circle cx="9" cy="9" r="3" fill={c} stroke="none" />}
    {kind === "ring" && <circle cx="9" cy="9" r="2.900" strokeWidth="2" />}
    {kind === "x" && <path d="M6 6l6 6M12 6l-6 6" strokeWidth="2" />}
    {kind === "menu" && (
      <g fill={c} stroke="none">
        <rect x="5" y="5" width="3.300" height="3.300" rx="1" />
        <rect x="9.700" y="5" width="3.300" height="3.300" rx="1" />
        <rect x="5" y="9.700" width="3.300" height="3.300" rx="1" />
        <rect x="9.700" y="9.700" width="3.300" height="3.300" rx="1" />
      </g>
    )}
  </svg>
);

const Tray = () => {
  const cell = "h-4 w-[22px] shrink-0";
  const p = { className: cell, viewBox: "-2 0 22 16", fill: "none", stroke: "#dfe1e2", strokeWidth: 1.1 };
  return (
    <>
      <svg {...p}>
        <path d="M5 11V6q0-3 3-3t3 3v5l1.500 1.500h-9ZM3 2 1.500 5M13 2l1.500 3" />
        <circle cx="8" cy="14.500" r="1" fill="#dfe1e2" />
      </svg>
      <svg {...p}>
        <path d="M3 14 6 2l1 6 3-6-1 9-3-2Z" fill="#dfe1e2" />
        <path d="M10 13l4-9" stroke="#888" strokeWidth="2" />
      </svg>
      <svg {...p}>
        <circle cx="8" cy="8" r="5.500" />
        <path d="M6.500 5.500v5M9.500 5.500v5" strokeWidth="1.600" />
      </svg>
      <svg {...p}>
        <path d="M3.500 3h9v11h-9zM6 1h4v3H6zM6 7h4M6 9.500h4M6 12v-5" />
      </svg>
      <svg {...p}>
        <path d="M2 6v4h2l3.500 3.500v-11L4 6Z" fill="#dfe1e2" />
        <path d="M9.500 5.500q2 2.500 0 5M11 3.500q4 4.500 0 9" />
        <path d="M12.500 2q5 6 0 12" stroke="#999" />
      </svg>
      <svg {...p}>
        <path d="M4.500 3h7v11.500h-7zM6.500 1h3v2h-3z" />
        <path d="M6 12V9l4-2v5Z" fill="#2bb673" stroke="none" />
      </svg>
      <svg {...p}>
        <path d="M1.500 6q6.500-6 13 0" stroke="#777c80" />
        <path d="M3.500 8q4.500-4 9 0" stroke="#999da0" />
        <path d="M5.500 10.500q2.500-2 5 0" />
        <circle cx="8" cy="13.500" r="1.500" fill="#dfe1e2" stroke="none" />
      </svg>
    </>
  );
};

const DockButtons = () => (
  <div className="flex gap-[3px]">
    <svg width="11" height="11" viewBox="0 0 11 11" fill="none" stroke="#9a9d9f">
      <path d="M.5.5h10v10H.5zM4.500 2.500h4v4h-4zM2.500 4.500h4v4h-4z" />
    </svg>
    <svg width="11" height="11" viewBox="0 0 11 11" fill="none" stroke="#9a9d9f">
      <path d="M.5.5h10v10H.5z" />
      <path d="M2.500 2.500l6 6M8.500 2.500l-6 6" strokeWidth="1.800" />
    </svg>
  </div>
);

const ScrollButton = ({ up = false }: { up?: boolean }) => (
  <div className="flex h-[13px] shrink-0 items-center justify-center border border-[#6d7479] bg-[#575f66]">
    {up ? <Up c="#c9cccd" /> : <Down c="#c9cccd" />}
  </div>
);
const Scrollbar = ({ thumb }: { thumb: string }) => (
  <div className="flex w-[13px] shrink-0 flex-col gap-px bg-[#24282b]">
    <ScrollButton up />
    <div className={`${thumb} shrink-0 border border-[#70767b] bg-linear-to-r from-[#565d66] to-[#5a6269]`} />
    <div className="flex-1 bg-[#464d51]" />
    <ScrollButton />
  </div>
);

const PanelTitle = ({ children, raise = false }: { children: ReactNode; raise?: boolean }) => (
  <div className="flex h-5 shrink-0 items-center justify-between pr-2 pl-1">
    <span className={raise ? "-mt-[2px]" : ""}>{children}</span>
    <DockButtons />
  </div>
);

const Tick = ({ dim = false }: { dim?: boolean }) => (
  <svg width="9" height="10" viewBox="0 0 9 10" fill="none" stroke={dim ? "#888b8d" : "#e4e6e6"} strokeWidth="1.800">
    <path d="M.8 5 3.500 8.500 7.800.8" />
  </svg>
);
const Check = ({ on = false, dim = false, dark = false }: { on?: boolean; dim?: boolean; dark?: boolean }) => (
  <div
    className={`flex size-[14px] shrink-0 items-center justify-center rounded-[1px] border border-[#23272a] ${dark ? "bg-[#2a2e32]" : "bg-[#2b3034]"}`}
  >
    {on && <Tick dim={dim} />}
  </div>
);

/* ---------- browser and layer trees ---------- */

const browser: [string, string, boolean][] = [
  ["favstar", "Favorites", false],
  ["bookmark", "Spatial Bookmarks", true],
  ["projhome", "Project Home", true],
  ["homefolder", "Home", true],
  ["folder", "/", true],
  ["gpkg", "GeoPackage", false],
  ["feather", "SpatiaLite", false],
  ["postgis", "PostGIS", true],
];

type Layer = {
  name: string;
  kind: "group" | "fill" | "dot" | "line" | "poly" | "class";
  color?: string;
  on?: boolean;
  child?: boolean;
  chip?: boolean;
  sel?: boolean;
  bold?: boolean;
};
const layers: Layer[] = [
  { name: "zad8", kind: "group" },
  { name: "Buffered_airports", kind: "fill", color: "#bdce4d", child: true, chip: true },
  { name: "Difference_da_dr", kind: "fill", color: "#e5b636", child: true, chip: true },
  { name: "Buffered_railroads", kind: "fill", color: "#e15989", child: true, chip: true },
  { name: "Clipped_difference_da_dr_to_regions", kind: "fill", color: "#d5b43c", child: true, chip: true, on: true },
  { name: "airports", kind: "dot", color: "#e77148" },
  { name: "bistrol_bay_popp", kind: "dot", color: "#8d5a99", on: true, bold: true },
  { name: "popp", kind: "dot", color: "#e5b636" },
  { name: "storagep", kind: "dot", color: "#beb297" },
  { name: "bistrol_bay)rivers_10kmbuf", kind: "fill", color: "#b7a965", on: true, bold: true, sel: true, chip: true },
  { name: "majrivers", kind: "line", color: "#64895f" },
  { name: "pipelines", kind: "line", color: "#a2474e" },
  { name: "railroads", kind: "line", color: "#729b56" },
  { name: "bistrol_bay_rivers", kind: "line", color: "#24379c", on: true, bold: true, chip: true },
  { name: "Buffered", kind: "fill", color: "#729b6f", chip: true },
  { name: "rivers", kind: "line", color: "#1a1aa8" },
  { name: "trails", kind: "line", color: "#d0871c" },
  { name: "builtups", kind: "fill", color: "#a47158" },
  { name: "grassland", kind: "fill", color: "#e8718d" },
  { name: "lakes", kind: "fill", color: "#bdce4d" },
  { name: "landice", kind: "fill", color: "#91522d" },
  { name: "swamp", kind: "fill", color: "#d5b43c" },
  { name: "trees", kind: "poly" },
  { name: "Deciduous", kind: "class", color: "#c93fa3", child: true, on: true },
  { name: "Evergreen", kind: "class", color: "#6280ee", child: true, on: true },
  { name: "Mixed Trees", kind: "class", color: "#85f0a0", child: true, on: true },
  { name: "tundra", kind: "fill", color: "#235009" },
  { name: "bistrol_bay", kind: "fill", color: "#729b6f", on: true, bold: true },
  { name: "regions", kind: "fill", color: "#8d5a99" },
  { name: "alaska", kind: "fill", color: "#c68886" },
];

const LayerRow = ({ l }: { l: Layer }) => {
  const plain = l.kind === "group" || l.kind === "class";
  const text = plain ? "" : l.bold ? "font-bold text-[#fcfcfc]" : "font-bold italic text-[#8b8e90]";
  return (
    <div className={`flex h-5 shrink-0 items-center pr-[8px] ${l.sel ? "bg-[#593657]" : ""}`}>
      <div className={`flex shrink-0 items-center ${l.child ? "w-[43px]" : "w-[23px]"}`}>
        {(l.kind === "group" || l.kind === "poly") && (
          <div className="pl-[6px]">
            <Down />
          </div>
        )}
      </div>
      <Check on={l.on} dim={l.on && l.child && l.kind === "fill"} dark={l.sel} />
      <div className="w-[6px] shrink-0" />
      {l.kind === "fill" && <div className="mr-[6px] size-4 shrink-0 border border-black/35" style={{ backgroundColor: l.color }} />}
      {l.kind === "class" && <div className="mr-[6px] size-[18px] shrink-0 border border-black/35" style={{ backgroundColor: l.color }} />}
      {l.kind === "dot" && (
        <div className="mr-[6px] flex w-4 shrink-0 justify-center">
          <div className="size-[6px] rounded-full" style={{ backgroundColor: l.color }} />
        </div>
      )}
      {l.kind === "line" && <div className="mr-[6px] h-[2px] w-[14px] shrink-0" style={{ backgroundColor: l.color }} />}
      {(l.kind === "group" || l.kind === "poly") && (
        <div className="mr-[6px]">
          <Icon n={l.kind} s="size-4" />
        </div>
      )}
      <span className={`pt-px ${text} ${l.sel ? "underline decoration-1 underline-offset-[3px] [text-decoration-skip-ink:none]" : ""}`}>{l.name}</span>
      {l.chip && (
        <div className={`ml-auto flex size-4 items-center justify-center rounded-[3px] ${l.sel ? "bg-[#33303a]" : "bg-[#303539]"}`}>
          <div className="h-[5px] w-[10px] rounded-[1px] border border-r-0 border-b-0 border-[#42474b]" />
        </div>
      )}
    </div>
  );
};

const LeftDock = () => (
  <div className="flex w-[415px] shrink-0 flex-col">
    <PanelTitle raise>Browser</PanelTitle>
    <div className="flex h-[30px] items-center gap-[9px] pb-[2px] pl-2">
      {["newlayer", "refresh", "funnel", "collapse", "info"].map((n) => (
        <Icon key={n} n={n} s="size-4" />
      ))}
    </div>
    <div className="flex h-[163px] w-[409px] shrink-0 border border-[#23272a] bg-[#2b3034]">
      <div className="flex flex-1 flex-col overflow-hidden">
        {browser.map(([ic, name, exp]) => (
          <div key={name} className="flex h-5 shrink-0 items-center">
            <div className="w-5 pl-[6px]">
              {exp && (
                <svg width="4" height="8" viewBox="0 0 4 8">
                  <path d="M0 0v8l4-4Z" fill="#a0a4a6" />
                </svg>
              )}
            </div>
            <Icon n={ic} s="size-[15px]" />
            <span className="pl-[6px]">{name}</span>
          </div>
        ))}
      </div>
      <Scrollbar thumb="h-[66px]" />
    </div>
    <div className="flex h-[6px] items-center justify-center gap-px pr-[3px]">
      {[0, 1, 2, 3, 4, 5].map((i) => (
        <div key={i} className="size-[2px] bg-[#80868a]" />
      ))}
    </div>
    <PanelTitle>Layers</PanelTitle>
    <div className="flex h-[31px] items-center gap-[9px] pb-px pl-2">
      <Icon n="brush" s="size-4" />
      <Icon n="groupadd" s="size-4" />
      <Icon n="eye" s="size-4" />
      <Icon n="funneldown" s="size-4" />
      <Icon n="epsilon" s="size-4" />
      <div className="-ml-[3px] w-[6px]">
        <Down />
      </div>
      <Icon n="expand" s="size-4" />
      <Icon n="collapse" s="size-4" />
      <Icon n="remove" s="size-4" />
    </div>
    <div className="flex h-[593px] w-[409px] shrink-0 border border-[#23272a] bg-[#2b3034]">
      <div className="flex flex-1 flex-col overflow-hidden">
        {layers.map((l) => (
          <LayerRow key={l.name} l={l} />
        ))}
      </div>
      <Scrollbar thumb="h-[554px]" />
    </div>
  </div>
);

/* ---------- map canvas ---------- */

const purple = [[559.3, 269], [509, 445], [508, 463], [574, 495], [669, 540], [546, 542], [501, 553], [475, 566]];
const yellow = [[867, 601], [1042, 628], [945, 677]];

const MapCanvas = () => (
  <svg width="1062" height="823" viewBox="416 224 1062 823" className="block bg-white">
    <g stroke="#232323" strokeWidth="1">
      <path
        fill="#729b6f"
        d="M569 241L592 242 617 242.300 667 245.300 696 245.700 744 248.700 774 249 821 252 846 252.300 896 255 921 255.400 945 257 973 257.300 1023 259.300 1047 260.300 1079 261 1186 267 1176.500 582.700 1171 738.300 1147 738 1142 737.600 1087.600 736 1044 734.300 968 731.300 936 730.700 911 729 727 722 702.700 721 410 707.400 410 605 416 602.700 420.800 601 438.700 582 442.900 579.700 453.600 574.300 469 555 497.500 546.300 520 548.700 532 545.300 545.700 537.300 564 535.300 569.300 530.700 573.600 531 565.400 520.700 542.900 521.700 518.600 530 501.800 523.300 494.600 512.300 492 500.700 499.600 470 497.900 440.700 502.900 431 514 418.700 524.600 417.700 530.700 409.300 544.300 382.300 550.400 361 560.400 349 564 325 555.700 307.300 555.700 282 550.400 277.300 550.400 260.700 564.300 244Z"
      />
      <path
        fill="#bdce4d"
        d="M903 314.700L947.700 314.700 953.300 316.300 964 307 1016 288 1033 284.700 1043.300 284.300 1050.700 280 1069.300 264.700 1079 261 1126.700 245.300 1140 240.700 1146 240 1185.700 237.300 1229 245.700 1254 258 1300 290 1330 400 1300 500 1253.500 537.700 1233 548.300 1224.800 549.300 1215 557 1198 572.700 1176.500 582.700 1152.700 593.300 1132.600 595.700 1100 604.300 1090.300 603.700 1079 610 1057.800 617.700 1036 632.300 1006.800 639 992.700 656.700 961.800 677.300 954.800 684.700 944.500 700.700 907 732.700 861 751.700 811.700 755.700 763 743.700 720.600 717.700 689 680.300 670 635 665.900 585 677.500 537 685 520 709.300 479 715 471.700 721.800 450 745.700 412.700 776 381.700 797.900 369.700 813.600 351.300 852 327.300 895 315.700Z"
      />
      {purple.map(([x, y]) => (
        <circle key={x} cx={x} cy={y} r="3.700" fill="#8d5a99" />
      ))}
      {yellow.map(([x, y]) => (
        <circle key={x} cx={x} cy={y} r="3.700" fill="#ffff00" />
      ))}
    </g>
  </svg>
);

const MapArea = () => (
  <div className="flex w-[1062px] shrink-0 flex-col bg-white">
    <div className="flex h-10 shrink-0 items-center border-b border-[#8c9c86] bg-[#dff0d8] pb-px pl-[9px] text-black">
      <svg width="24" height="18" viewBox="0 0 24 18" className="shrink-0">
        <path d="M.5 2 6 8 23.500.5 6.500 17Z" fill="#2bdc2b" stroke="#178a17" />
      </svg>
      <span className="pl-[10px] font-bold">Layer Exported:</span>
      <span className="pl-1">Successfully saved vector layer to</span>
      <span className="ml-1 text-[#2e8b0e] underline underline-offset-2 [text-decoration-skip-ink:none]">bistrol_bay_popp.shp</span>
    </div>
    <MapCanvas />
  </div>
);

/* ---------- right dock ---------- */

const field = "rounded-[3px] border border-[#747a7f] bg-linear-to-b from-[#606870] to-[#4f575e] shadow-[0_1px_1px_#202427]";
const sunk = "border border-[#23272a] bg-[#2b3034]";

const RightDock = () => (
  <div className="flex flex-1 flex-col pl-[6px]">
    <div className="flex h-[50px] justify-end pt-[3px] pr-[3px]">
      <DockButtons />
    </div>
    <div className={`h-[26px] shrink-0 ${sunk}`} />
    <div className={`flex h-[70px] shrink-0 justify-end ${sunk}`}>
      <Scrollbar thumb="h-[26px]" />
    </div>
    <div className="flex h-[26px] shrink-0 items-center justify-end pt-1 pr-[3px]">
      <DockButtons />
    </div>
    <div className={`h-[192px] shrink-0 ${sunk}`} />
    <div className={`mt-1 h-[70px] shrink-0 ${sunk}`} />
    <div className="flex h-[57px] shrink-0 justify-end pt-[10px] pr-[3px]">
      <DockButtons />
    </div>
    <div className={`h-[300px] shrink-0 ${sunk}`}>
      <div className="h-[22px] border-t border-[#70767b] bg-[#535b62]" />
    </div>
    <div className="flex h-[37px] shrink-0 items-center pr-[6px] pl-[6px]">
      <span className="w-[42px]">Mode</span>
      <div className={`flex h-[25px] flex-1 items-center justify-between pr-[6px] pl-[3px] ${field}`}>
        <span>Current Layer</span>
        <Down c="#c9cccd" />
      </div>
    </div>
    <div className="flex h-[26px] shrink-0 items-center pl-[6px] text-[#6c7175]">
      <span className="w-[37px]">View</span>
      <div className={`flex h-[25px] w-[77px] items-center justify-between pr-[6px] pl-[3px] text-[#7d8286] ${field}`}>
        <span>Tree</span>
        <Down c="#7d8286" />
      </div>
    </div>
  </div>
);

/* ---------- status bar ---------- */

const Spin = ({ value }: { value: string }) => (
  <div className={`flex h-[25px] w-[89px] shrink-0 rounded-[3px] ${sunk}`}>
    <span className="flex-1 self-center pl-[3px]">{value}</span>
    <div className="flex w-[13px] flex-col items-center justify-between bg-[#535b62] py-[5px]">
      <Up c="#d0d2d3" />
      <Down c="#d0d2d3" />
    </div>
  </div>
);

const StatusBar = () => (
  <div className="flex h-[33px] shrink-0 items-center text-[11.2px]">
    <div className={`ml-1 flex h-[26px] w-[235px] shrink-0 items-center rounded-[3px] pl-2 text-[13px] text-[#8b8e90] ${sunk}`}>
      <svg width="13" height="13" viewBox="0 0 13 13" fill="none" stroke="#8b8e90" strokeWidth="1.200">
        <circle cx="5" cy="5" r="4.300" />
        <path d="M8 8l4.500 4.500" />
      </svg>
      <span className="pl-[7px]">Type to locate (Ctrl+K)</span>
    </div>
    <span className="ml-[835px] w-[61px] shrink-0">Coordinate</span>
    <div className={`flex h-[25px] w-[108px] shrink-0 items-center justify-center rounded-[3px] ${sunk}`}>-501033,3090037</div>
    <svg width="18" height="18" viewBox="0 0 18 18" className="mr-3 ml-[3px] shrink-0" fill="none" stroke="#d5d6d6" strokeWidth="1.200">
      <path d="M2 1 8 9M7 1l2 7M2 8l5 3M12 4l-2 4" />
      <circle cx="11" cy="12" r="4" fill="#d5d6d6" />
      <path d="M9 11l4 3" stroke="#222" />
    </svg>
    <span className="w-[30px] shrink-0">Scale</span>
    <div className={`flex h-[25px] w-[87px] shrink-0 rounded-[3px] ${sunk}`}>
      <span className="flex-1 self-center pl-[3px]">1:238746</span>
      <div className="flex w-[18px] items-center justify-center bg-[#535b62]">
        <Down c="#d0d2d3" />
      </div>
    </div>
    <svg width="14" height="16" viewBox="0 0 14 16" className="mr-2 ml-3 shrink-0">
      <path d="M3 8V4.500a4 4 0 0 1 8 0V8" fill="none" stroke="#a9abac" strokeWidth="1.800" />
      <rect x="1" y="7" width="12" height="8.500" rx="1" fill="#7d8082" />
    </svg>
    <span className="w-[53px] shrink-0">Magnifier</span>
    <Spin value="100%" />
    <span className="ml-[10px] w-[53px] shrink-0">Rotation</span>
    <Spin value="0.0 °" />
    <div className="ml-[7px]">
      <Check on />
    </div>
    <span className="w-[59px] shrink-0 pl-[5px]">Render</span>
    <svg width="14" height="14" viewBox="0 0 14 14" className="shrink-0">
      <circle cx="7" cy="7" r="6.300" fill="#b9bbbb" />
      <path d="M1 5h12M1 9h12M7 1v12M4 1.500q-2 5.500 0 11M10 1.500q2 5.500 0 11" stroke="#4c5053" strokeWidth=".8" fill="none" />
    </svg>
    <span className="w-[82px] shrink-0 pl-[3px]">EPSG:2964</span>
    <svg width="17" height="16" viewBox="0 0 17 16" className="shrink-0">
      <path d="M8 1a6.500 6.500 0 1 0 4 11.500L16 15l-1.500-5A6.500 6.500 0 0 0 8 1Z" fill="#7b7e80" />
      <path d="M4 7h2M7.500 7h2M11 7h2" stroke="#fff" strokeWidth="2" />
    </svg>
  </div>
);

/* ---------- Select by Location window ---------- */

const Option = ({ label, on = false, w }: { label: string; on?: boolean; w: string }) => (
  <div className={`-ml-px flex items-center gap-[5px] ${w}`}>
    <Check on={on} />
    <span>{label}</span>
  </div>
);
const button = `flex h-[25px] shrink-0 items-center justify-center ${field}`;

const Dialog = () => (
  <div className="absolute top-[164px] left-[1254px] flex h-[643px] w-[525px] flex-col rounded-[16px] bg-[#31363b] shadow-[0_2px_12px_rgba(0,0,0,0.55)]">
    <div className="flex h-[37px] shrink-0 items-center pr-[9px] pb-[2px] pl-[7px]">
      <Icon n="qgis" s="size-[22px]" />
      <div className="pl-[6px]">
        <Circle kind="menu" c="#f2f3f3" />
      </div>
      <span className="flex-1 text-center">Select by Location</span>
      <div className="flex gap-2">
        <Circle kind="dot" c="#f2f3f3" />
        <Circle kind="ring" c="#f2f3f3" />
        <Circle kind="x" c="#f2f3f3" />
      </div>
    </div>
    <div className="flex h-[502px] shrink-0 pt-[10px] pl-4">
      <div className="flex w-[340px] shrink-0 flex-col">
        <div className="flex h-[29px] shrink-0 items-end gap-px">
          <div className="flex h-[29px] w-[94px] items-center justify-center rounded-t-[3px] border border-b-0 border-[#747a7f] bg-[#565e66]">Parameters</div>
          <div className="mb-px flex h-[26px] w-[45px] items-center justify-center rounded-t-[3px] border border-[#6a7075] bg-[#484f55]">Log</div>
        </div>
        <div className="flex h-[461px] shrink-0 flex-col border border-[#70767b] border-b-[#23272a] px-[5px]">
          <span className="-ml-px flex h-[28px] items-center">Select features from</span>
          <div className="flex gap-2">
            <div className={`flex h-[25px] w-[296px] items-center pr-[6px] pl-[6px] ${field}`}>
              <svg width="14" height="14" viewBox="0 0 14 14" fill="#e8e9e6">
                <circle cx="1.500" cy="12" r="1" />
                <circle cx="3.500" cy="4.500" r="1" />
                <circle cx="10.500" cy="2" r="1" />
              </svg>
              <span className="flex-1 pl-[3px]">bistrol_bay_popp [EPSG:2964]</span>
              <Down c="#c9cccd" />
            </div>
            <div className={`${button} w-[23px]`}>...</div>
          </div>
          <span className="-ml-px flex h-[33px] items-center">Where the features (geometric predicate)</span>
          {[
            ["intersect", "touch"],
            ["contain", "overlap"],
            ["disjoint", "are within"],
            ["equal", "cross"],
          ].map(([a, b]) => (
            <div key={a} className="mb-[10px] flex h-5 items-center">
              <Option label={a} w="w-[86px]" />
              <Option label={b} on={b === "are within"} w="w-[120px]" />
            </div>
          ))}
          <span className="-mt-[8px] -ml-px flex h-[31px] shrink-0 items-center">By comparing to the features from</span>
          <div className="flex items-center">
            <div className={`flex h-[25px] w-[224px] shrink-0 items-center pr-[6px] pl-[5px] ${field}`}>
              <Icon n="poly" s="size-[15px]" />
              <span className="flex-1 overflow-hidden pl-1">bistrol_bay)rivers_10kmbuf [E</span>
              <Down c="#c9cccd" />
            </div>
            <div className="pr-[14px] pl-[11px]">
              <Icon n="iterate" s="size-[22px]" />
            </div>
            <div className="w-[33px]">
              <Icon n="wrench" s="size-[22px]" />
            </div>
            <div className={`${button} relative w-[23px]`}>
              ...
              <svg width="5" height="3" viewBox="0 0 8 5" className="absolute right-px bottom-[3px]">
                <path d="M0 0h8L4 4.500Z" fill="#c9cccd" />
              </svg>
            </div>
          </div>
          <div className="-ml-px flex h-[36px] items-center gap-[5px] text-[#6c7175]">
            <Check />
            <span>Selected features only</span>
          </div>
          <span className="-mt-[2px] -ml-px flex h-[24px] items-center">Modify current selection by</span>
          <div className={`mt-[3px] flex h-[25px] w-[327px] items-center justify-between pr-[6px] pl-[3px] ${field}`}>
            <span>creating new selection</span>
            <Down c="#c9cccd" />
          </div>
        </div>
      </div>
      <div className="flex w-4 shrink-0 flex-col items-center pt-[2px] pr-[3px]">
        <svg width="5" height="9" viewBox="0 0 5 9">
          <path d="M0 0v9l5-4.500Z" fill="#a8acaf" />
        </svg>
        <div className="flex flex-col gap-px pt-[227px] pl-[5px]">
          {[0, 1, 2, 3, 4, 5].map((i) => (
            <div key={i} className="size-[2px] bg-[#80868a]" />
          ))}
        </div>
      </div>
      <div className={`h-[492px] w-[138px] shrink-0 px-[4px] pt-[5px] ${sunk}`}>
        <div className="text-[20px] leading-[27px] font-bold text-[#4f5254]">
          Select by
          <br />
          location
        </div>
        <div className="pt-[12px] leading-[18px] text-[#65696c]">
          {[
            "This algorithm",
            "creates a selection in",
            "a vector layer. The",
            "criteria for selecting",
            "features is based on",
            "the spatial",
            "relationship",
            "between each",
            "feature and the",
            "features in an",
            "additional layer.",
          ].map((t) => (
            <div key={t}>{t}</div>
          ))}
        </div>
      </div>
    </div>
    <div className="flex items-center gap-[7px] pt-[30px] pl-[15px]">
      <div className={`flex h-[26px] w-[409px] shrink-0 items-center justify-center rounded-[3px] ${sunk}`}>0%</div>
      <div className={`${button} w-[79px] text-[#7d8286]`}>Cancel</div>
    </div>
    <div className="flex items-center pt-[6px] pl-4">
      <div className={`${button} w-[78px] gap-1`}>
        <svg width="13" height="13" viewBox="0 0 13 13" fill="none" stroke="#f2f3f3" strokeWidth="1.500">
          <circle cx="6.500" cy="6.500" r="5.500" strokeDasharray="5 1" />
          <circle cx="6.500" cy="6.500" r="2.500" />
          <path d="M1 1l3 3M12 1 9 4M1 12l3-3M12 12 9 9" />
        </svg>
        <span>
          <span className="underline underline-offset-2">H</span>elp
        </span>
      </div>
      <div className={`${button} ml-2 w-[166px]`}>Run as Batch Process...</div>
      <div className={`${button} ml-[77px] w-[78px] gap-1`}>
        <svg width="12" height="11" viewBox="0 0 12 11" fill="none" stroke="#f2f3f3" strokeWidth="1.200">
          <path d="M.5 5.500 4 9.500 11.500.5" />
        </svg>
        Run
      </div>
      <div className="ml-[7px] flex h-[26px] w-[80px] items-center justify-center gap-1 rounded-[3px] border border-[#8e4c88] bg-linear-to-b from-[#6a6373] to-[#5c5664]">
        <svg width="13" height="13" viewBox="0 0 13 13">
          <circle cx="6.500" cy="6.500" r="6" fill="#ee6a7c" />
          <path d="M4 4l5 5M9 4 4 9" stroke="#5c2f3b" />
        </svg>
        <span>
          <span className="underline underline-offset-2">C</span>lose
        </span>
      </div>
    </div>
  </div>
);

export default function App() {
  return (
    <div className="relative flex h-[1080px] w-[1920px] flex-col overflow-hidden bg-[#31363b] font-['Noto_Sans',sans-serif] text-[13px] leading-5 whitespace-nowrap text-[#eff0f1]">
      <div className="flex h-[31px] shrink-0 items-center pb-[2px] shadow-[0_1px_2px_rgba(0,0,0,0.45)]">
        <div className="ml-[5px] flex h-5 w-[126px] shrink-0 items-center rounded-[5px] bg-[#101214] pl-[25px]">
          <svg width="90" height="14" viewBox="0 0 90 14" fill="none" stroke="#c8cacb">
            <g fill="#f2f3f3" stroke="none">
              {[1, 5, 9].map((y) => [0, 4, 8, 11.500].map((x) => <rect key={`${x}-${y}`} x={x} y={y} width="1.700" height="1.700" />))}
            </g>
            <path d="M43 12.500h-8a2 2 0 0 1-2-2v-7M34 1.500h7a2 2 0 0 1 2 2v9" />
            <path d="M64 5.500h8q2 0 2-4M64 8.500h11M64 12.500q1-4 3-4" />
          </svg>
        </div>
        <div className="ml-[11.500px] flex">
          {menu.map(([t, w]) => (
            <span key={t} className={`shrink-0 ${w}`}>
              {t}
            </span>
          ))}
        </div>
        <div className="ml-auto flex items-center">
          <Tray />
          <div className="w-[26px] pl-[7px]">
            <svg width="11" height="7" viewBox="0 0 11 7">
              <path d="M0 0h11L5.500 6.500Z" fill="#f2f3f3" />
            </svg>
          </div>
          <span className="w-[79px] text-[13.300px]">06.11.2021</span>
          <span className="w-[35px] text-[13.300px]">17:20</span>
        </div>
      </div>
      <div className="flex h-[35px] shrink-0 items-center pr-[9px] pb-[2px] pl-[7px] text-[#9a9d9f]">
        <Icon n="qgis" s="size-[22px]" />
        <div className="pl-[6px]">
          <Circle kind="menu" c="#9a9d9f" />
        </div>
        <span className="flex-1 text-center">*lab4 — QGIS</span>
        <div className="flex gap-2">
          <Circle kind="dot" c="#9a9d9f" />
          <Circle kind="ring" c="#9a9d9f" />
          <Circle kind="x" c="#9a9d9f" />
        </div>
      </div>
      <Toolbar items="newfile open save layout layoutmgr style | hand -pan zoomin zoomout zoomfull -zoomsel zoomlayer -zoomnative zoomlast -zoomnext newmap new3d newbook showbook clock refresh | *identify abacus *gear sigma table v ruler v tip -gearrun -v" />
      <Toolbar items="datasource geopackage shape spatialite memory mesh . virtual . | -pencils pencil -saveedit -addpoly -vertex -v -attrs -trash -cut -copy -paste -undo -redo | label diagram . labelpin labelred . -dlabelpin -dlabeleye -dlabelmove -dlabelrot -dlabeledit | csw | python | help |" />
      <Toolbar items="select v selform v deselect v selloc | -gridpen -gridsel -v -gridtf -gridtri -v | annot v pickarrow polyanno lineanno staranno textanno . textbox v" />
      <div className="flex h-[864px] shrink-0 border-t border-[#74787b]">
        <LeftDock />
        <div className="flex w-px flex-col bg-[#23272a]">
          <div className="mt-[427px] -ml-[3px] flex w-[2px] flex-col gap-px">
            {[0, 1, 2, 3, 4, 5].map((i) => (
              <div key={i} className="size-[2px] bg-[#80868a]" />
            ))}
          </div>
        </div>
        <MapArea />
        <RightDock />
      </div>
      <StatusBar />
      <Dialog />
    </div>
  );
}
